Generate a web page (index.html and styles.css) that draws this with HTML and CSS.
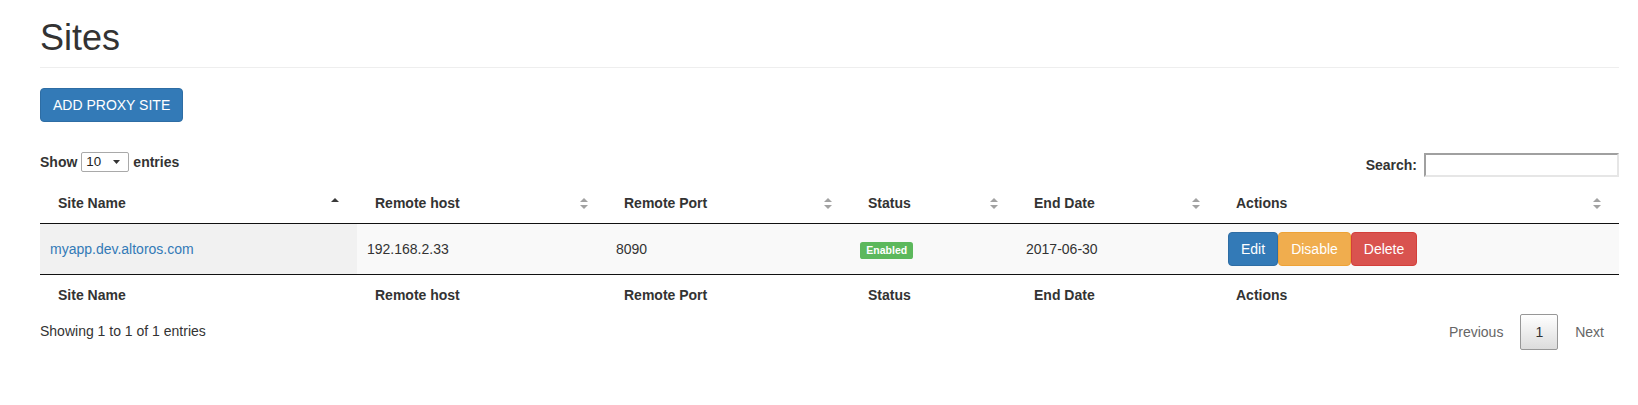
FILE: index.html
```html
<!DOCTYPE html>
<html lang="en">
<head>
<meta charset="utf-8">
<title>Sites</title>
<link rel="stylesheet" href="styles.css">
</head>
<body>
<div class="page">
  <div class="page-header">
    <h1 class="title">Sites</h1>
  </div>
  <button class="btn btn-primary btn-add" type="button">ADD PROXY SITE</button>

  <div class="toolbar">
    <div class="length">
      <span class="lbl">Show</span>
      <div class="select"><span>10</span><svg class="caret" width="7" height="4" viewBox="0 0 7 4"><polygon points="0,0 7,0 3.5,4" fill="#333"/></svg></div>
      <span class="lbl">entries</span>
    </div>
    <div class="filter">
      <span class="lbl">Search:</span>
      <div class="search-input"></div>
    </div>
  </div>

  <table class="data">
    <colgroup>
      <col class="c1"><col class="c2"><col class="c3"><col class="c4"><col class="c5"><col class="c6">
    </colgroup>
    <thead>
      <tr>
        <th>Site Name<svg class="sort" width="8" height="11" viewBox="0 0 8 11"><polygon points="4,0 8,4 0,4" fill="#3a3a3a"/></svg></th>
        <th>Remote host<svg class="sort" width="8" height="11" viewBox="0 0 8 11"><polygon points="4,0 8,4 0,4" fill="#a2a2a2"/><polygon points="0,7 8,7 4,11" fill="#a2a2a2"/></svg></th>
        <th>Remote Port<svg class="sort" width="8" height="11" viewBox="0 0 8 11"><polygon points="4,0 8,4 0,4" fill="#a2a2a2"/><polygon points="0,7 8,7 4,11" fill="#a2a2a2"/></svg></th>
        <th>Status<svg class="sort" width="8" height="11" viewBox="0 0 8 11"><polygon points="4,0 8,4 0,4" fill="#a2a2a2"/><polygon points="0,7 8,7 4,11" fill="#a2a2a2"/></svg></th>
        <th>End Date<svg class="sort" width="8" height="11" viewBox="0 0 8 11"><polygon points="4,0 8,4 0,4" fill="#a2a2a2"/><polygon points="0,7 8,7 4,11" fill="#a2a2a2"/></svg></th>
        <th>Actions<svg class="sort" width="8" height="11" viewBox="0 0 8 11"><polygon points="4,0 8,4 0,4" fill="#a2a2a2"/><polygon points="0,7 8,7 4,11" fill="#a2a2a2"/></svg></th>
      </tr>
    </thead>
    <tbody>
      <tr class="odd">
        <td class="sorted"><a class="link" href="#">myapp.dev.altoros.com</a></td>
        <td>192.168.2.33</td>
        <td>8090</td>
        <td><span class="label label-success">Enabled</span></td>
        <td>2017-06-30</td>
        <td><div class="actions"><button class="btn btn-primary" type="button">Edit</button><button class="btn btn-warning" type="button">Disable</button><button class="btn btn-danger" type="button">Delete</button></div></td>
      </tr>
    </tbody>
    <tfoot>
      <tr>
        <th>Site Name</th>
        <th>Remote host</th>
        <th>Remote Port</th>
        <th>Status</th>
        <th>End Date</th>
        <th>Actions</th>
      </tr>
    </tfoot>
  </table>

  <div class="table-footer">
    <div class="info">Showing 1 to 1 of 1 entries</div>
    <div class="paginate">
      <a class="page-btn disabled" href="#">Previous</a><a class="page-btn current" href="#">1</a><a class="page-btn disabled" href="#">Next</a>
    </div>
  </div>
</div>
</body>
</html>
```

FILE: styles.css
```css
* {
  box-sizing: border-box;
}

html, body {
  margin: 0;
  background: #fff;
}

body {
  font-family: "Liberation Sans", Arial, sans-serif;
  font-size: 14px;
  line-height: 20px;
  color: #333;
}

.page {
  padding: 18px 19px 0 40px;
}

.page-header {
  padding-bottom: 9px;
  border-bottom: 1px solid #eee;
  margin-bottom: 20px;
}

.title {
  margin: 0;
  font-size: 36px;
  line-height: 39.6px;
  font-weight: 400;
  color: #333;
}

.btn {
  display: inline-block;
  margin: 0;
  padding: 6px 12px;
  font-family: inherit;
  font-size: 14px;
  line-height: 20px;
  border: 1px solid transparent;
  border-radius: 4px;
  color: #fff;
  white-space: nowrap;
  cursor: pointer;
}

.btn-primary {
  background: #337ab7;
  border-color: #2e6da4;
}

.btn-warning {
  background: #f0ad4e;
  border-color: #eea236;
}

.btn-danger {
  background: #d9534f;
  border-color: #d43f3a;
}

.btn-add {
  display: block;
}

.toolbar {
  display: flex;
  justify-content: space-between;
  align-items: flex-start;
  margin-top: 30px;
}

.length {
  display: flex;
  align-items: center;
  gap: 4px;
  height: 20px;
}

.lbl {
  font-weight: 700;
}

.select {
  display: flex;
  align-items: center;
  justify-content: space-between;
  width: 48px;
  height: 20px;
  padding: 0 8px 0 4px;
  border: 1px solid #a9a9a9;
  border-radius: 2px;
  font-size: 13.33px;
  line-height: 18px;
  color: #222;
  background: #fff;
}

.caret {
  display: block;
}

.filter {
  display: flex;
  align-items: center;
  gap: 7px;
  margin-top: 1px;
}

.search-input {
  width: 195px;
  height: 24px;
  border: 2px solid;
  border-color: #a0a0a0 #e6e6e6 #e6e6e6 #a0a0a0;
  background: #fff;
}

.data {
  width: 100%;
  table-layout: fixed;
  border-collapse: separate;
  border-spacing: 0;
  margin-top: 6px;
}

.c1 { width: 317px; }
.c2 { width: 249px; }
.c3 { width: 244px; }
.c4 { width: 166px; }
.c5 { width: 202px; }
.c6 { width: 401px; }

.data th {
  position: relative;
  text-align: left;
  font-weight: 700;
  color: #333;
}

.data thead th {
  padding: 10px 18px;
  border-bottom: 1px solid #111;
}

.data tfoot th {
  padding: 10px 18px 6px 18px;
  border-top: 1px solid #111;
}

.sort {
  position: absolute;
  right: 18px;
  top: 15px;
  display: block;
}

.data td {
  padding: 8px 10px;
  vertical-align: middle;
  background: #f9f9f9;
}

.data td.sorted {
  background: #f1f1f1;
}

.link {
  color: #337ab7;
  text-decoration: none;
}

.label {
  display: inline;
  padding: 0.2em 0.6em 0.3em;
  font-size: 10.5px;
  font-weight: 700;
  line-height: 1;
  color: #fff;
  border-radius: 0.25em;
  white-space: nowrap;
}

.label-success {
  background: #5cb85c;
}

.actions {
  display: flex;
}

.table-footer {
  display: flex;
  justify-content: space-between;
  align-items: flex-start;
}

.info {
  padding-top: 10.5px;
}

.paginate {
  display: flex;
  padding-top: 3.5px;
}

.page-btn {
  display: inline-block;
  min-width: 21px;
  padding: 7px 14px;
  margin-left: 2px;
  border: 1px solid transparent;
  border-radius: 2px;
  text-align: center;
  text-decoration: none;
  color: #333;
}

.page-btn.disabled {
  color: #666;
}

.page-btn.current {
  color: #333;
  border-color: #979797;
  background: linear-gradient(to bottom, #fff 0%, #dcdcdc 100%);
}
```
